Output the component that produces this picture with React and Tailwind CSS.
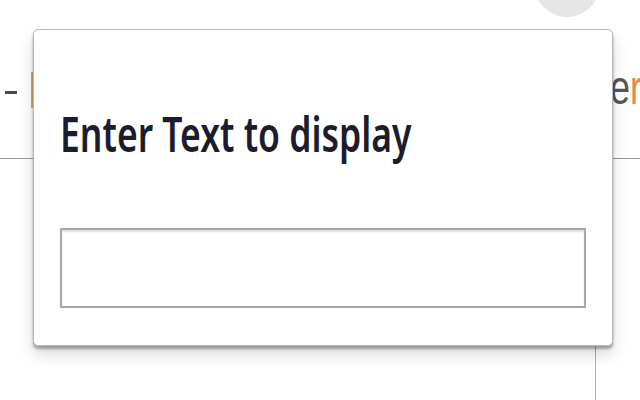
import React from 'react';

// Popup asking for the text to show, drawn over a partly hidden page.
function BackgroundPage() {
  return (
    <div className="h-full flex flex-col">
      <div className="h-[159px] shrink-0 border-b border-[#9a9a9a] flex flex-col">
        <div className="flex justify-end pr-[40px]">
          <div className="w-[66px] h-[66px] -mt-[49px] rounded-full bg-[#e6e6e6]" />
        </div>
        <div className="mt-[55px] flex items-start">
          <div className="ml-[5px] mt-[19px] w-[12px] h-[3px] bg-[#4a4a4a] shrink-0" />
          <div className="ml-[14px] w-[2px] h-[36px] bg-[#e7a26e] shrink-0" />
          <span
            className="ml-[577px] -mt-[8px] shrink-0 text-[48px] leading-none whitespace-nowrap origin-left scale-x-[0.75]"
            style={{ fontFamily: '"Liberation Sans", Arial, sans-serif' }}
          >
            <span className="text-[#555555]">e</span>
            <span className="text-[#e58a45]">r</span>
          </span>
        </div>
      </div>
      <div className="flex-1 ml-[595px] border-l border-[#b0b0b0]" />
    </div>
  );
}

function TextPopup() {
  return (
    <div className="absolute left-[33px] top-[29px] w-[580px] h-[317px] bg-white border border-[#b8b8b8] rounded-[5px] shadow-[0_3px_3px_rgba(0,0,0,0.32),0_9px_16px_rgba(0,0,0,0.14)] flex flex-col px-[26px] pt-[80px]">
      <h2
        className="text-[48px] leading-none font-semibold text-[#1d1c2c] whitespace-nowrap origin-left scale-x-[0.74]"
        style={{ fontFamily: '"Noto Sans", "Open Sans", sans-serif' }}
      >
        Enter Text to display
      </h2>
      <input
        type="text"
        className="mt-[70px] h-[80px] w-full border-2 border-[#a6a6a6] bg-white shadow-[inset_0_2px_2px_rgba(0,0,0,0.12)] outline-none"
      />
    </div>
  );
}

export default function App() {
  return (
    <div className="relative w-[640px] h-[400px] bg-white overflow-hidden">
      <BackgroundPage />
      <TextPopup />
    </div>
  );
}
